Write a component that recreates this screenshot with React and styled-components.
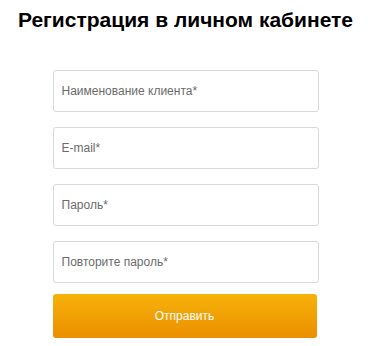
import React from 'react';
import styled, { createGlobalStyle } from 'styled-components';

const GlobalStyle = createGlobalStyle`
    html, body {
        margin: 0;
        padding: 0;
        background: #FFFFFF;
        font-family: 'Liberation Sans', Arial, sans-serif;
    }
`
const Page = styled.div`
    width: 371px;
    height: 346px;
    display: flex;
    flex-direction: column;
    align-items: center;
`
const Title = styled.h1`
    margin: 8px 0 0 0;
    font-size: 21px;
    line-height: 24px;
    font-weight: 700;
    color: #000000;
`
const Form = styled.form`
    margin-top: 38px;
    width: 266px;
    display: flex;
    flex-direction: column;
    gap: 15px;
`
const Input = styled.input`
    box-sizing: border-box;
    width: 266px;
    height: 42px;
    padding: 0 8px;
    border: 1px solid #D9D9D9;
    border-radius: 3px;
    background: #FFFFFF;
    font-family: 'Liberation Sans', Arial, sans-serif;
    font-size: 12px;
    color: #333333;
    outline: none;
    &::placeholder {
        color: #6B6B6B;
    }
`
const Button = styled.button`
    box-sizing: border-box;
    width: 264px;
    height: 44px;
    margin-top: -4px;
    border: none;
    border-radius: 3px;
    background: linear-gradient(to bottom, #F6B20A, #EB8F00);
    color: #FFFFFF;
    font-family: 'Liberation Sans', Arial, sans-serif;
    font-size: 12px;
    cursor: pointer;
`

const fields = [
    { type: 'text', placeholder: 'Наименование клиента*' },
    { type: 'email', placeholder: 'E-mail*' },
    { type: 'password', placeholder: 'Пароль*' },
    { type: 'password', placeholder: 'Повторите пароль*' },
]

const App = () => {
    return(
        <Page>
            <GlobalStyle />
            <Title>Регистрация в личном кабинете</Title>
            <Form onSubmit={e => e.preventDefault()}>
                {fields.map(f => (
                    <Input key={f.placeholder} type={f.type} placeholder={f.placeholder} />
                ))}
                <Button type="submit">Отправить</Button>
            </Form>
        </Page>
    )
}

export default App
